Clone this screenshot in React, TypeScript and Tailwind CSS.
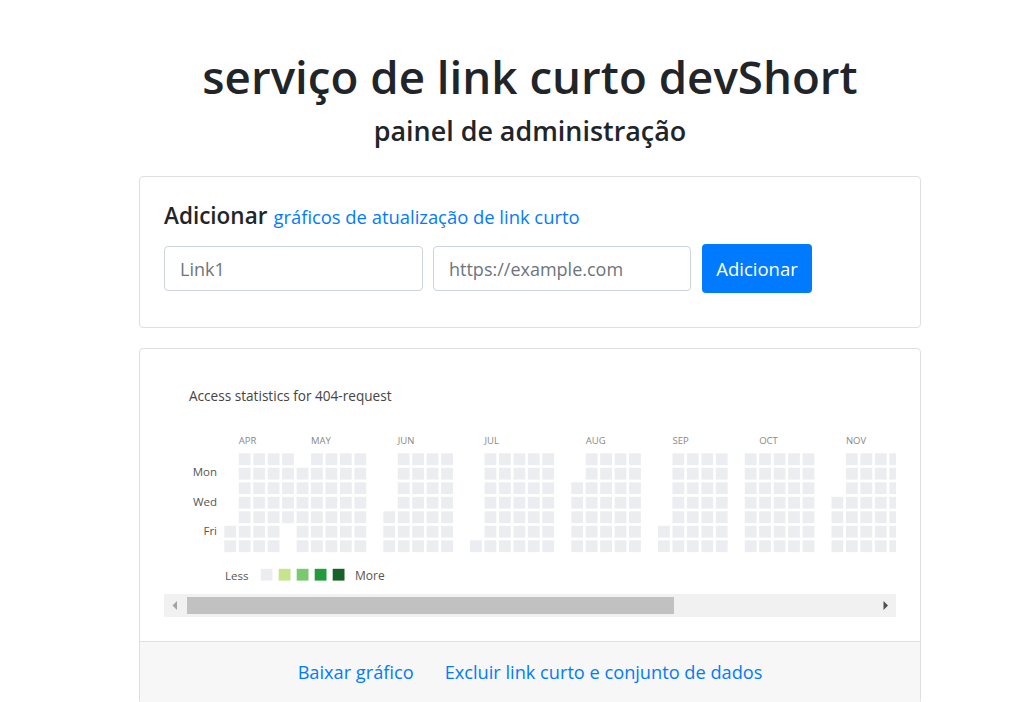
import React from "react";

const P = 14.457;
const X0 = 60.3;
const Y0 = 83.3;
const RP = 14.5;
const CELL = 11.8;

// [fromRow, toRow] per column, null = empty gap column
const cols: ([number, number] | null)[] = [
  [5, 6], [0, 6], [0, 6], [0, 6], [0, 4], [1, 6], [0, 6], [0, 6], [0, 6], [0, 6],
  null,
  [4, 6], [0, 6], [0, 6], [0, 6], [0, 6],
  null,
  [6, 6], [0, 6], [0, 6], [0, 6], [0, 6], [0, 6],
  null,
  [2, 6], [0, 6], [0, 6], [0, 6], [0, 6],
  null,
  [5, 6], [0, 6], [0, 6], [0, 6], [0, 6],
  null,
  [0, 6], [0, 6], [0, 6], [0, 6], [0, 6],
  null,
  [3, 6], [0, 6], [0, 6], [0, 6], [0, 6],
];

const months: [string, number][] = [
  ["APR", 1], ["MAY", 6], ["JUN", 12], ["JUL", 18], ["AUG", 25], ["SEP", 31], ["OCT", 37], ["NOV", 43],
];

const legend = ["#ebedf0", "#c6e48b", "#7bc96f", "#239a3b", "#196127"];

function Heatmap() {
  const cells: React.ReactNode[] = [];
  cols.forEach((c, k) => {
    if (!c) return;
    for (let r = c[0]; r <= c[1]; r++) {
      cells.push(
        <rect key={`${k}-${r}`} x={X0 + k * P} y={Y0 + r * RP} width={CELL} height={CELL} fill="#ebedf0" />
      );
    }
  });
  return (
    <svg width={732} height={224} className="block" style={{ fontFamily: "'Open Sans', sans-serif" }}>
      <text x={25} y={30.5} fontSize={13.6} fill="#444">Access statistics for 404-request</text>
      {months.map(([m, k]) => (
        <text key={m} x={X0 + k * P} y={74} fontSize={9.5} fill="#888">{m}</text>
      ))}
      <text x={53} y={106} fontSize={11.5} fill="#555" textAnchor="end">Mon</text>
      <text x={53} y={135.5} fontSize={11.5} fill="#555" textAnchor="end">Wed</text>
      <text x={53} y={165} fontSize={11.5} fill="#555" textAnchor="end">Fri</text>
      {cells}
      <text x={61} y={210} fontSize={11.5} fill="#555">Less</text>
      {legend.map((c, i) => (
        <rect key={c} x={96.7 + i * 18} y={198.8} width={11.8} height={11.8} fill={c} />
      ))}
      <text x={191} y={210} fontSize={12} fill="#555">More</text>
    </svg>
  );
}

function ScrollBar() {
  return (
    <div className="relative h-[23px] w-[732px] bg-[#f1f1f1]">
      <svg className="absolute left-[8px] top-[7px]" width={6} height={9}>
        <path d="M5 0 L5 9 L0.5 4.5 Z" fill="#a3a3a3" />
      </svg>
      <div className="absolute left-[23px] top-[3px] h-[17px] w-[487px] bg-[#c1c1c1]" />
      <svg className="absolute left-[719px] top-[7px]" width={6} height={9}>
        <path d="M0.5 0 L0.5 9 L5 4.5 Z" fill="#505050" />
      </svg>
    </div>
  );
}

export default function App() {
  return (
    <div className="min-h-screen bg-white font-['Open_Sans',sans-serif] text-[#212529]">
      <div className="ml-[139px] w-[782px]">
        <h1 className="pt-[48px] text-center text-[45.7px] font-semibold leading-[56px]">
          serviço de link curto devShort
        </h1>
        <h2 className="mt-[11px] text-center text-[26.9px] font-semibold leading-[32px]">
          painel de administração
        </h2>

        <div className="mt-[29px] rounded-[4px] border border-[#dfdfdf] bg-white px-[24px] pb-[34px] pt-[25px]">
          <div className="flex h-[28px] items-baseline leading-[28px]">
            <span className="text-[22.5px] font-semibold">Adicionar</span>
            <span className="ml-[6px] text-[18.4px] text-[#007bff]">gráficos de atualização de link curto</span>
          </div>
          <div className="mt-[14px] flex h-[49px] items-center">
            <input
              className="h-[45px] w-[259px] rounded-[4px] border border-[#ced4da] px-[15px] text-[18px] text-[#495057] outline-none placeholder:text-[#6c757d]"
              placeholder="Link1"
            />
            <input
              className="ml-[10px] h-[45px] w-[258px] rounded-[4px] border border-[#ced4da] px-[15px] text-[18px] text-[#495057] outline-none placeholder:text-[#6c757d]"
              placeholder="https://example.com"
            />
            <button className="ml-[11px] h-[49px] w-[110px] rounded-[4px] bg-[#007bff] text-[18.5px] text-white">
              Adicionar
            </button>
          </div>
        </div>

        <div className="mt-[20px] overflow-hidden rounded-[4px] border border-[#dfdfdf] bg-white">
          <div className="px-[24px] pb-[24px] pt-[21px]">
            <Heatmap />
            <ScrollBar />
          </div>
          <div className="flex h-[62px] items-center justify-center gap-[31px] border-t border-[#dfdfdf] bg-[#f7f7f7] text-[18.2px] text-[#007bff]">
            <span>Baixar gráfico</span>
            <span>Excluir link curto e conjunto de dados</span>
          </div>
        </div>
      </div>
    </div>
  );
}
